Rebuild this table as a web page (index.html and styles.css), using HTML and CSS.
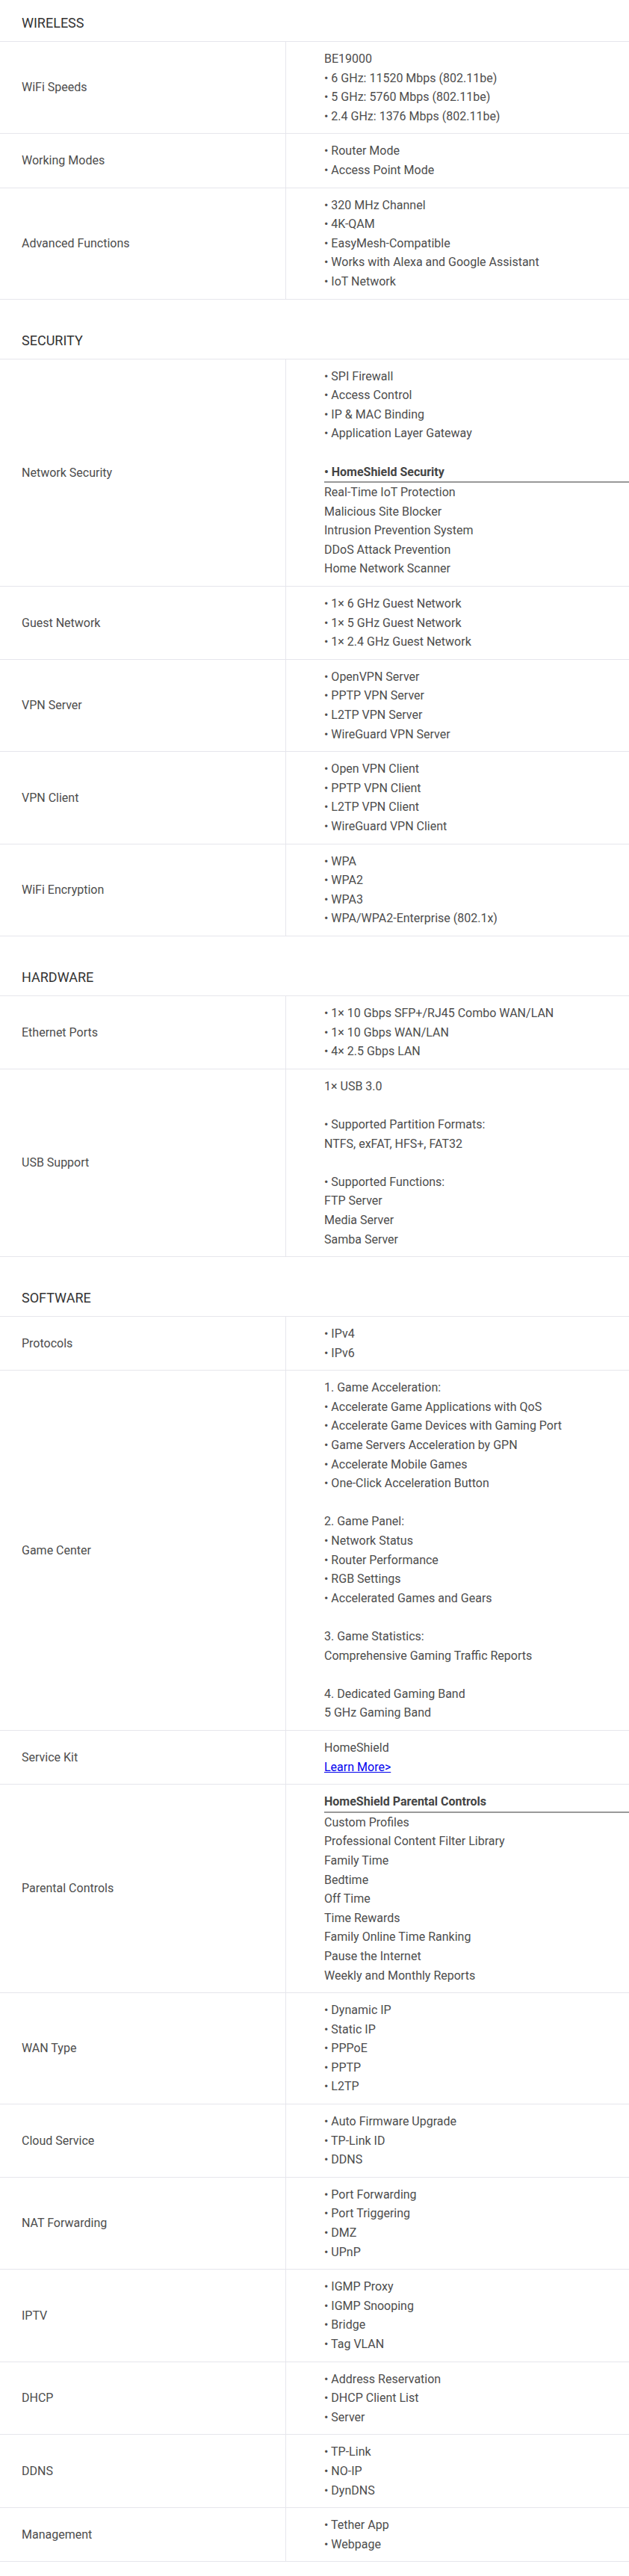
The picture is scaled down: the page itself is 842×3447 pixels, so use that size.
FILE: index.html
```html
<!DOCTYPE html>
<html>

<head>
    <title>Specifications</title>
    <link rel="stylesheet" href="styles.css">
</head>

<body>
    <div class="spec">
        <div class="section">
            <h2 class="section-title">WIRELESS</h2>
            <table class="spec-table">
                <tr>
                    <td class="label">WiFi Speeds</td>
                    <td class="value">BE19000<br>• 6 GHz: 11520 Mbps (802.11be)<br>• 5 GHz: 5760 Mbps (802.11be)<br>• 2.4 GHz: 1376 Mbps (802.11be)</td>
                </tr>
                <tr>
                    <td class="label">Working Modes</td>
                    <td class="value">• Router Mode<br>• Access Point Mode</td>
                </tr>
                <tr>
                    <td class="label">Advanced Functions</td>
                    <td class="value">• 320 MHz Channel<br>• 4K-QAM<br>• EasyMesh-Compatible<br>• Works with Alexa and Google Assistant<br>• IoT Network</td>
                </tr>
            </table>
        </div>

        <div class="section">
            <h2 class="section-title">SECURITY</h2>
            <table class="spec-table">
                <tr>
                    <td class="label">Network Security</td>
                    <td class="value">• SPI Firewall<br>• Access Control<br>• IP &amp; MAC Binding<br>• Application Layer Gateway<br><br>
                        <div class="sub-title">• HomeShield Security</div>
                        Real-Time IoT Protection<br>Malicious Site Blocker<br>Intrusion Prevention System<br>DDoS Attack Prevention<br>Home Network Scanner
                    </td>
                </tr>
                <tr>
                    <td class="label">Guest Network</td>
                    <td class="value">• 1× 6 GHz Guest Network<br>• 1× 5 GHz Guest Network<br>• 1× 2.4 GHz Guest Network</td>
                </tr>
                <tr>
                    <td class="label">VPN Server</td>
                    <td class="value">• OpenVPN Server<br>• PPTP VPN Server<br>• L2TP VPN Server<br>• WireGuard VPN Server</td>
                </tr>
                <tr>
                    <td class="label">VPN Client</td>
                    <td class="value">• Open VPN Client<br>• PPTP VPN Client<br>• L2TP VPN Client<br>• WireGuard VPN Client</td>
                </tr>
                <tr>
                    <td class="label">WiFi Encryption</td>
                    <td class="value">• WPA<br>• WPA2<br>• WPA3<br>• WPA/WPA2-Enterprise (802.1x)</td>
                </tr>
            </table>
        </div>

        <div class="section">
            <h2 class="section-title">HARDWARE</h2>
            <table class="spec-table">
                <tr>
                    <td class="label">Ethernet Ports</td>
                    <td class="value">• 1× 10 Gbps SFP+/RJ45 Combo WAN/LAN<br>• 1× 10 Gbps WAN/LAN<br>• 4× 2.5 Gbps LAN</td>
                </tr>
                <tr>
                    <td class="label">USB Support</td>
                    <td class="value">1× USB 3.0<br><br>• Supported Partition Formats:<br>NTFS, exFAT, HFS+, FAT32<br><br>• Supported Functions:<br>FTP Server<br>Media Server<br>Samba Server</td>
                </tr>
            </table>
        </div>

        <div class="section">
            <h2 class="section-title">SOFTWARE</h2>
            <table class="spec-table">
                <tr>
                    <td class="label">Protocols</td>
                    <td class="value">• IPv4<br>• IPv6</td>
                </tr>
                <tr>
                    <td class="label">Game Center</td>
                    <td class="value">1. Game Acceleration:<br>• Accelerate Game Applications with QoS<br>• Accelerate Game Devices with Gaming Port<br>• Game Servers Acceleration by GPN<br>• Accelerate Mobile Games<br>• One-Click Acceleration Button<br><br>2. Game Panel:<br>• Network Status<br>• Router Performance<br>• RGB Settings<br>• Accelerated Games and Gears<br><br>3. Game Statistics:<br>Comprehensive Gaming Traffic Reports<br><br>4. Dedicated Gaming Band<br>5 GHz Gaming Band</td>
                </tr>
                <tr>
                    <td class="label">Service Kit</td>
                    <td class="value">HomeShield<br><a href="#">Learn More&gt;</a></td>
                </tr>
                <tr>
                    <td class="label">Parental Controls</td>
                    <td class="value">
                        <div class="sub-title">HomeShield Parental Controls</div>
                        Custom Profiles<br>Professional Content Filter Library<br>Family Time<br>Bedtime<br>Off Time<br>Time Rewards<br>Family Online Time Ranking<br>Pause the Internet<br>Weekly and Monthly Reports
                    </td>
                </tr>
                <tr>
                    <td class="label">WAN Type</td>
                    <td class="value">• Dynamic IP<br>• Static IP<br>• PPPoE<br>• PPTP<br>• L2TP</td>
                </tr>
                <tr>
                    <td class="label">Cloud Service</td>
                    <td class="value">• Auto Firmware Upgrade<br>• TP-Link ID<br>• DDNS</td>
                </tr>
                <tr>
                    <td class="label">NAT Forwarding</td>
                    <td class="value">• Port Forwarding<br>• Port Triggering<br>• DMZ<br>• UPnP</td>
                </tr>
                <tr>
                    <td class="label">IPTV</td>
                    <td class="value">• IGMP Proxy<br>• IGMP Snooping<br>• Bridge<br>• Tag VLAN</td>
                </tr>
                <tr>
                    <td class="label">DHCP</td>
                    <td class="value">• Address Reservation<br>• DHCP Client List<br>• Server</td>
                </tr>
                <tr>
                    <td class="label">DDNS</td>
                    <td class="value">• TP-Link<br>• NO-IP<br>• DynDNS</td>
                </tr>
                <tr>
                    <td class="label">Management</td>
                    <td class="value">• Tether App<br>• Webpage</td>
                </tr>
            </table>
        </div>
    </div>
</body>

</html>
```

FILE: styles.css
```css
html,
body {
    padding: 0;
    margin: 0;
    background-color: #fff;
}

body {
    font-family: Roboto, "Liberation Sans", sans-serif;
    font-size: 16px;
    line-height: 1.6;
    color: #4d4d4d;
}

.spec {
    padding-bottom: 20px;
}

.section + .section {
    margin-top: 24px;
}

.section-title {
    margin: 0;
    padding: 18px 29px 11px;
    font-size: 18px;
    font-weight: normal;
    line-height: 26px;
    color: #333;
}

.spec-table {
    width: 100%;
    border-collapse: collapse;
    border-top: 1px solid #e6e6ec;
}

.spec-table tr {
    border-bottom: 1px solid #e6e6ec;
}

.spec-table td {
    padding: 10px 0;
    vertical-align: middle;
}

.label {
    width: 353px;
    padding-left: 29px !important;
}

.value {
    padding-left: 51px !important;
    border-left: 1px solid #e6e6ec;
}

/* 小标题下面带一条灰线 */
.sub-title {
    font-weight: bold;
    color: #444;
    border-bottom: 2px solid #999;
}

.value a {
    color: #0000ee;
}
```
